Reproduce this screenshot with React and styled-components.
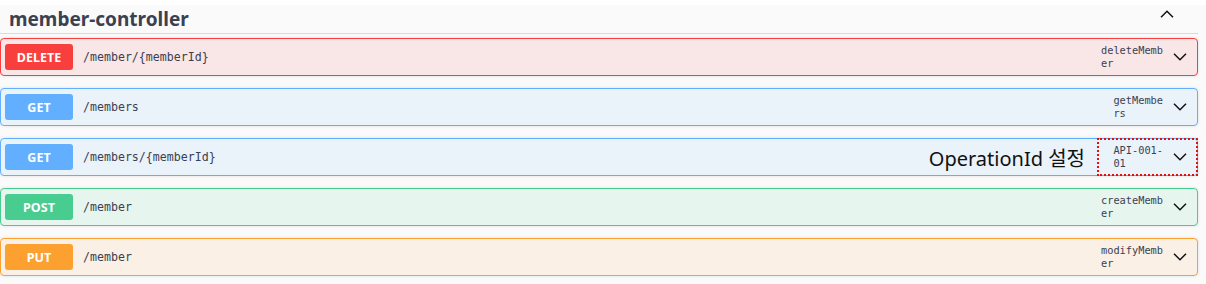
import React from "react";
import styled, { createGlobalStyle } from "styled-components";

const METHODS = {
  DELETE: "#f93e3e",
  GET: "#61affe",
  POST: "#49cc90",
  PUT: "#fca130",
};

// chars: how many monospace chars fit on a line of the operationId column
const ops = [
  { method: "DELETE", path: "/member/{memberId}", opId: "deleteMember", chars: 10 },
  { method: "GET", path: "/members", opId: "getMembers", chars: 8 },
  {
    method: "GET",
    path: "/members/{memberId}",
    opId: "API-001-01",
    chars: 8,
    note: "OperationId 설정",
  },
  { method: "POST", path: "/member", opId: "createMember", chars: 10 },
  { method: "PUT", path: "/member", opId: "modifyMember", chars: 10 },
];

const GlobalStyle = createGlobalStyle`
  body {
    margin: 0;
    background: #ffffff;
    font-family: "Noto Sans", "Open Sans", sans-serif;
  }
`;

const Page = styled.div`
  margin-top: 5px;
  background: #fafafa;
  height: 279px;
`;

const Header = styled.div`
  display: flex;
  align-items: center;
  justify-content: space-between;
  height: 28px;
  margin-right: 8px;
  padding-left: 9px;
  border-bottom: 1px solid #d6dae2;
`;

const Title = styled.h3`
  margin: 0;
  font-size: 19px;
  font-weight: 700;
  color: #3b4151;
  line-height: 28px;
`;

const List = styled.div`
  display: flex;
  flex-direction: column;
  gap: 12px;
  margin-top: 4px;
  margin-right: 8px;
`;

const Row = styled.div`
  display: flex;
  align-items: stretch;
  height: 36px;
  border: 1px solid ${(p) => p.$color};
  border-radius: 4px;
  background: ${(p) => p.$color}1a;
  box-shadow: 0 0 3px rgba(0, 0, 0, 0.12);
`;

const Badge = styled.span`
  display: flex;
  align-items: center;
  justify-content: center;
  width: 68px;
  margin: 5px 0 5px 4px;
  border-radius: 3px;
  background: ${(p) => p.$color};
  color: #fff;
  font-size: 12.5px;
  font-weight: 700;
`;

const Path = styled.span`
  display: flex;
  align-items: center;
  flex: 1;
  padding-left: 10px;
  font-family: "DejaVu Sans Mono", "Liberation Mono", monospace;
  font-size: 11.6px;
  color: #3b4151;
`;

const Note = styled.span`
  display: flex;
  align-items: center;
  margin-right: 12px;
  font-family: "Noto Sans", "Noto Sans CJK KR", sans-serif;
  font-size: 20px;
  color: #111;
`;

const Summary = styled.div`
  display: flex;
  align-items: center;
  justify-content: flex-end;
  gap: 9px;
  width: 101px;
  box-sizing: border-box;
  padding: 0 11px 0 4px;
  margin: -1px -1px -1px 0;
  outline: ${(p) => (p.$marked ? "2px dotted #e01010" : "none")};
  outline-offset: -2px;
`;

const OpId = styled.span`
  width: ${(p) => p.$chars * 6.2 + 1}px;
  font-family: "DejaVu Sans Mono", "Liberation Mono", monospace;
  font-size: 10.3px;
  line-height: 13px;
  color: #3b4151;
  word-break: break-all;
`;

const Chevron = ({ up }) => (
  <svg width="14" height="8" viewBox="0 0 14 8" fill="none">
    <path
      d={up ? "M1 7.2 7 1.2 13 7.2" : "M1 0.8 7 6.8 13 0.8"}
      stroke="#111"
      strokeWidth="1.5"
    />
  </svg>
);

const HeaderToggle = styled.span`
  display: flex;
  margin-right: 24px;
  margin-top: -10px;
`;

export default function App() {
  return (
    <>
      <GlobalStyle />
      <Page>
        <Header>
          <Title>member-controller</Title>
          <HeaderToggle>
            <Chevron up />
          </HeaderToggle>
        </Header>
        <List>
          {ops.map((op) => {
            const color = METHODS[op.method];
            return (
              <Row key={op.method + op.path} $color={color}>
                <Badge $color={color}>{op.method}</Badge>
                <Path>{op.path}</Path>
                {op.note && <Note>{op.note}</Note>}
                <Summary $marked={!!op.note}>
                  <OpId $chars={op.chars}>{op.opId}</OpId>
                  <Chevron />
                </Summary>
              </Row>
            );
          })}
        </List>
      </Page>
    </>
  );
}
